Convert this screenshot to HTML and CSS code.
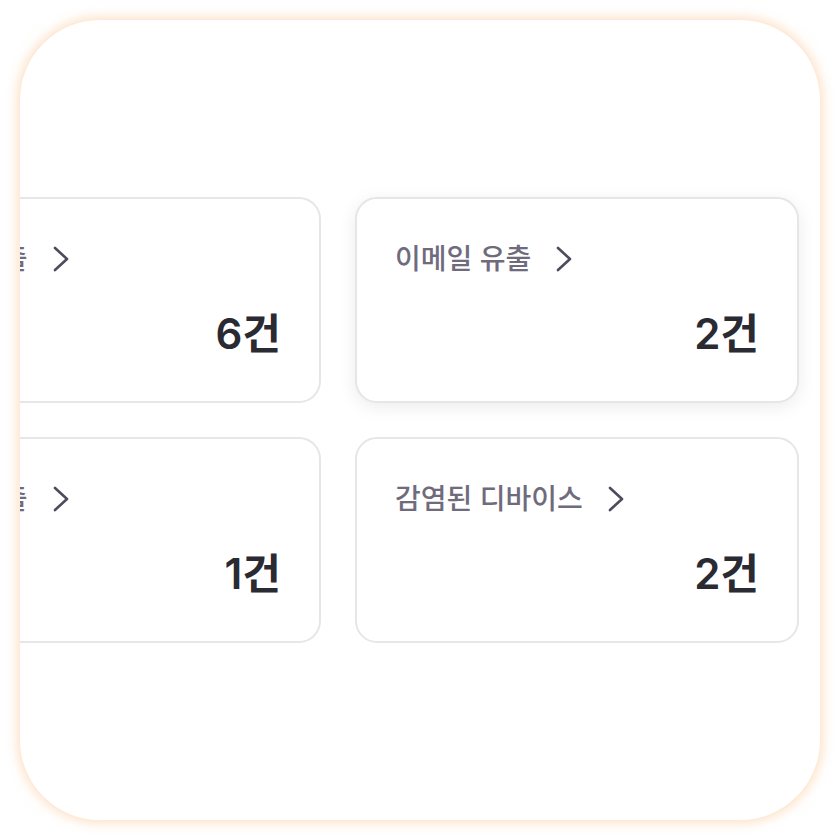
FILE: index.html
```html
<!DOCTYPE html>
<html lang="ko">
<head>
<meta charset="utf-8">
<link rel="stylesheet" href="styles.css">
</head>
<body>
<div class="frame">
  <div class="grid">
    <div class="row">
      <div class="card">
        <div class="label"><span>계정 유출</span><svg class="chev" viewBox="0 0 18 28"><path d="M3 3 L15 14 L3 25"/></svg></div>
        <div class="count">6건</div>
      </div>
      <div class="card card-hover">
        <div class="label"><span>이메일 유출</span><svg class="chev" viewBox="0 0 18 28"><path d="M3 3 L15 14 L3 25"/></svg></div>
        <div class="count">2건</div>
      </div>
    </div>
    <div class="row">
      <div class="card">
        <div class="label"><span>카드 유출</span><svg class="chev" viewBox="0 0 18 28"><path d="M3 3 L15 14 L3 25"/></svg></div>
        <div class="count">1건</div>
      </div>
      <div class="card">
        <div class="label"><span>감염된 디바이스</span><svg class="chev" viewBox="0 0 18 28"><path d="M3 3 L15 14 L3 25"/></svg></div>
        <div class="count">2건</div>
      </div>
    </div>
  </div>
</div>
</body>
</html>
```
FILE: styles.css
```css
html, body {
  margin: 0;
  padding: 0;
  background: #ffffff;
}
body {
  width: 840px;
  height: 840px;
  font-family: "Inter", "Noto Sans CJK KR", "Noto Sans", sans-serif;
  padding: 20px;
  box-sizing: border-box;
}
.frame {
  width: 800px;
  height: 800px;
  border-radius: 80px;
  background: #ffffff;
  overflow: hidden;
  box-shadow: 0 0 11px 3px rgba(252, 205, 160, 0.6);
  box-sizing: border-box;
  padding: 177px 21px 0 0;
}
.grid {
  display: flex;
  flex-direction: column;
  gap: 34px;
}
.row {
  display: flex;
  justify-content: flex-end;
  gap: 34px;
}
.card {
  flex: 0 0 444px;
  width: 444px;
  height: 206px;
  box-sizing: border-box;
  border: 2px solid #e6e6e9;
  border-radius: 22px;
  background: #ffffff;
  padding: 44px 38px 0 38px;
  display: flex;
  flex-direction: column;
}
.card-hover {
  box-shadow: 0 4px 18px rgba(0, 0, 0, 0.08);
}
.label {
  display: flex;
  align-items: center;
  gap: 24px;
  font-size: 28px;
  line-height: 32px;
  font-weight: 500;
  color: #6f6b7d;
}
.chev {
  width: 18px;
  height: 28px;
  flex: none;
}
.chev path {
  fill: none;
  stroke: #4d4b5c;
  stroke-width: 2.6;
  stroke-linecap: round;
  stroke-linejoin: round;
}
.count {
  margin-top: 38px;
  text-align: right;
  font-size: 42px;
  line-height: 42px;
  font-weight: 600;
  color: #2a2a33;
}
```
